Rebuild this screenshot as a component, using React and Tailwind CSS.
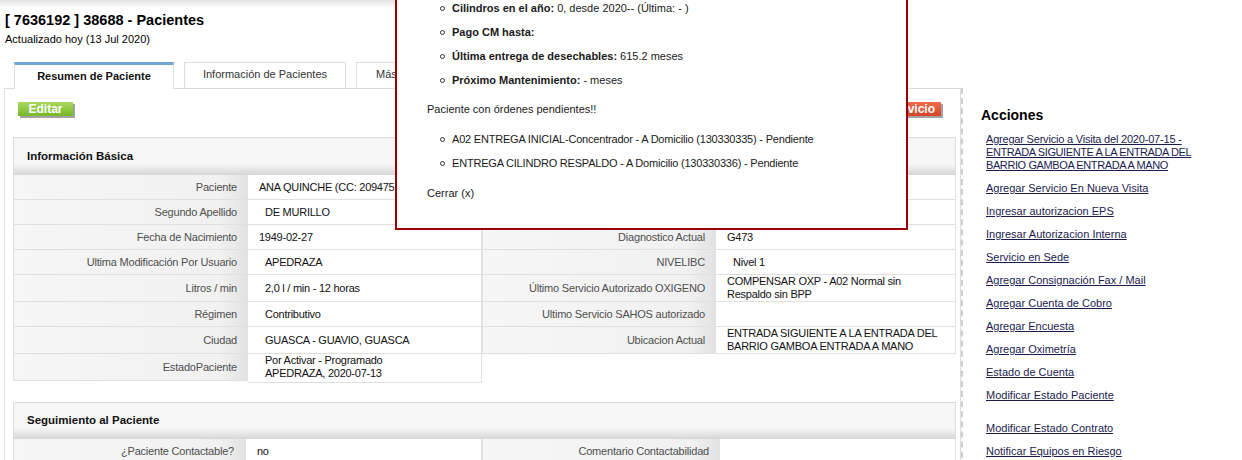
export default function App() {
  const labelBg =
    "bg-[linear-gradient(to_right,#f6f6f6_0%,#f1f1f1_88%,#e2e2e2_100%)]";
  const lab = `flex items-center justify-end pr-[11px] text-[#4f4f4f] border-b border-l border-[#e0e0e0] tracking-[-0.2px] ${labelBg}`;
  const val = "flex items-center pl-[11px] text-[#111] border-b border-r border-[#e0e0e0] bg-white leading-[13px] tracking-[-0.25px]";
  const val2 = "flex items-center pl-[17px] text-[#111] border-b border-r border-[#e0e0e0] bg-white leading-[13px] tracking-[-0.25px]";

  const links1 = [
    "Agregar Servicio En Nueva Visita",
    "Ingresar autorizacion EPS",
    "Ingresar Autorizacion Interna",
    "Servicio en Sede",
    "Agregar Consignación Fax / Mail",
    "Agregar Cuenta de Cobro",
    "Agregar Encuesta",
    "Agregar Oximetría",
    "Estado de Cuenta",
    "Modificar Estado Paciente",
  ];
  const links2 = ["Modificar Estado Contrato", "Notificar Equipos en Riesgo"];

  const Bullet = () => (
    <span className="ml-[13px] mr-[7px] inline-block h-[5px] w-[5px] shrink-0 rounded-full border border-[#333]" />
  );

  return (
    <div className="relative h-[460px] w-[1242px] overflow-hidden bg-white font-['Liberation_Sans',Arial,sans-serif] text-[11px] text-[#222]">
      {/* header */}
      <div className="h-[62px] w-[905px] bg-[linear-gradient(to_bottom,#e2e2e2,#ffffff_8px)] pl-[5px] pt-[12px]">
        <div className="text-[14.5px] font-bold leading-[17px] text-black">
          [ 7636192 ] 38688 - Pacientes
        </div>
        <div className="mt-[4px] leading-[13px] text-black">Actualizado hoy (13 Jul 2020)</div>
      </div>

      {/* tabs */}
      <div className="relative z-10 -mb-px flex h-[27px] gap-[10px] pl-[14px]">
        <div className="flex h-[27px] w-[160px] items-center justify-center border-x border-t-[3px] border-x-[#dcdcdc] border-t-[#6fa6d8] bg-white pb-[1px] font-bold text-[#111]">
          Resumen de Paciente
        </div>
        <div className="flex h-[27px] w-[162px] items-center justify-center border border-[#dcdcdc] bg-white pb-[2px] text-[#333]">
          Información de Pacientes
        </div>
        <div className="flex h-[27px] w-[120px] items-center border border-[#dcdcdc] bg-white pb-[2px] pl-[19px] text-[#333]">
          Más Información
        </div>
      </div>

      <div className="flex">
        {/* panel */}
        <div className="ml-[4px] h-[400px] w-[957px] shrink-0 border-x border-t border-[#dcdcdc] pl-[8px] pt-[13px]">
          <div className="flex h-[17px] w-[930px] items-start justify-between pl-[5px]">
            <div className="flex h-[14px] w-[55px] items-center justify-center bg-linear-to-b from-[#a9d95c] to-[#76b727] text-[12px] font-bold text-white shadow-[2px_2px_0_#a3a3a3]">
              Editar
            </div>
            <div className="mr-[2px] flex h-[14px] items-center justify-center whitespace-nowrap bg-linear-to-b from-[#ee6b4c] to-[#d6442a] px-[6px] text-[12px] font-bold text-white shadow-[2px_2px_0_#a3a3a3]">
              Agregar Servicio
            </div>
          </div>

          {/* Información Básica */}
          <div className="mt-[18px] flex h-[38px] w-[943px] items-center border border-b-0 border-[#dcdcdc] bg-linear-to-b from-[#f6f6f6] from-70% to-[#d6d6d6] pl-[13px] text-[11.5px] font-bold text-[#111]">
            Información Básica
          </div>
          <div className="grid w-[943px] grid-cols-[235px_234px_234px_240px]">
            <div className={`${lab} h-[25px]`}>Paciente</div>
            <div className={val}>ANA QUINCHE (CC: 20947575)</div>
            <div className={lab}>Estado Contrato</div>
            <div className={val}>Activo</div>

            <div className={`${lab} h-[25px]`}>Segundo Apellido</div>
            <div className={val2}>DE MURILLO</div>
            <div className={lab}>Tipo de Paciente</div>
            <div className={val}>Oxígeno</div>

            <div className={`${lab} h-[25px]`}>Fecha de Nacimiento</div>
            <div className={val}>1949-02-27</div>
            <div className={lab}>Diagnostico Actual</div>
            <div className={val}>G473</div>

            <div className={`${lab} h-[25px]`}>Ultima Modificación Por Usuario</div>
            <div className={val2}>APEDRAZA</div>
            <div className={lab}>NIVELIBC</div>
            <div className={val2}>Nivel 1</div>

            <div className={`${lab} h-[27px]`}>Litros / min</div>
            <div className={val2}>2,0 l / min - 12 horas</div>
            <div className={lab}>Último Servicio Autorizado OXIGENO</div>
            <div className={val}>
              COMPENSAR OXP - A02 Normal sin
              <br />
              Respaldo sin BPP
            </div>

            <div className={`${lab} h-[25px]`}>Régimen</div>
            <div className={val2}>Contributivo</div>
            <div className={lab}>Ultimo Servicio SAHOS autorizado</div>
            <div className={val}></div>

            <div className={`${lab} h-[27px]`}>Ciudad</div>
            <div className={val2}>GUASCA - GUAVIO, GUASCA</div>
            <div className={lab}>Ubicacion Actual</div>
            <div className={val}>
              ENTRADA SIGUIENTE A LA ENTRADA DEL
              <br />
              BARRIO GAMBOA ENTRADA A MANO
            </div>

            <div className={`${lab} h-[27px]`}>EstadoPaciente</div>
            <div className={`${val2} pb-[2px]`}>
              Por Activar - Programado
              <br />
              APEDRAZA, 2020-07-13
            </div>
            <div />
            <div />
          </div>

          {/* Seguimiento */}
          <div className="mt-[19px] flex h-[37px] w-[943px] items-center border border-b-0 border-[#dcdcdc] bg-linear-to-b from-[#f6f6f6] from-70% to-[#d6d6d6] pl-[13px] text-[11.5px] font-bold text-[#111]">
            Seguimiento al Paciente
          </div>
          <div className="grid w-[943px] grid-cols-[233px_236px_238px_236px]">
            <div className={`${lab} h-[25px] pr-[12px]`}>¿Paciente Contactable?</div>
            <div className={`${val} pl-[10px]`}>no</div>
            <div className={lab}>Comentario Contactabilidad</div>
            <div className={val}></div>
          </div>
        </div>

        {/* sidebar */}
        <div className="h-[400px] flex-1 border-l-2 border-dashed border-[#cfcfcf] pl-[18px] pt-[19px]">
          <div className="text-[14px] font-bold leading-[17px] text-black">Acciones</div>
          <div className="mt-[9px] flex flex-col gap-[10px] pl-[5px] leading-[13px] text-[#1c1c50]">
            <div className="underline">
              <span className="tracking-[-0.2px]">Agregar Servicio a Visita del 2020-07-15 -</span>
              <br />
              <span className="tracking-[-0.4px]">ENTRADA SIGUIENTE A LA ENTRADA DEL</span>
              <br />
              <span className="tracking-[-0.4px]">BARRIO GAMBOA ENTRADA A MANO</span>
            </div>
            {links1.map((l) => (
              <div key={l} className="underline">
                {l}
              </div>
            ))}
            <div className="mt-[10px] flex flex-col gap-[10px]">
              {links2.map((l) => (
                <div key={l} className="underline">
                  {l}
                </div>
              ))}
            </div>
          </div>
        </div>
      </div>

      {/* popup */}
      <div className="absolute left-[395px] top-[-20px] z-20 h-[250px] w-[513px] border-2 border-[#990000] bg-white pl-[30px] pt-[19.5px] text-[#1a1a1a]">
        <div className="flex flex-col gap-[11px]">
          <div className="flex h-[13px] items-center leading-[13px]">
            <Bullet />
            <span>
              <b>Cilindros en el año:</b> 0, desde 2020-- (Última: - )
            </span>
          </div>
          <div className="flex h-[13px] items-center leading-[13px]">
            <Bullet />
            <b>Pago CM hasta:</b>
          </div>
          <div className="flex h-[13px] items-center leading-[13px]">
            <Bullet />
            <span>
              <b>Última entrega de desechables:</b> 615.2 meses
            </span>
          </div>
          <div className="flex h-[13px] items-center leading-[13px]">
            <Bullet />
            <span>
              <b>Próximo Mantenimiento:</b> - meses
            </span>
          </div>
        </div>
        <div className="mt-[16px] h-[13px] leading-[13px]">Paciente con órdenes pendientes!!</div>
        <div className="mt-[17px] flex flex-col gap-[11px] tracking-[-0.2px]">
          <div className="flex h-[13px] items-center leading-[13px]">
            <Bullet />
            <span>A02 ENTREGA INICIAL-Concentrador - A Domicilio (130330335) - Pendiente</span>
          </div>
          <div className="flex h-[13px] items-center leading-[13px]">
            <Bullet />
            <span>ENTREGA CILINDRO RESPALDO - A Domicilio (130330336) - Pendiente</span>
          </div>
        </div>
        <div className="mt-[17px] h-[13px] leading-[13px]">Cerrar (x)</div>
      </div>
    </div>
  );
}
